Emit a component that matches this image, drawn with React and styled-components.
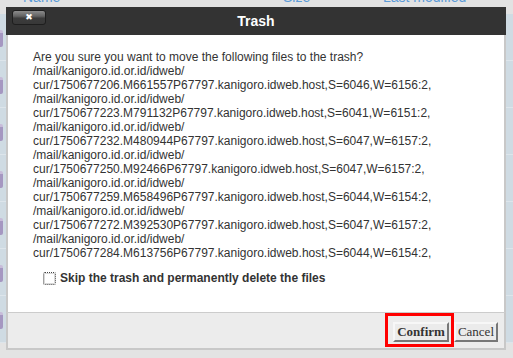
import React from "react"
import styled, { createGlobalStyle } from "styled-components"

const files = [
  "cur/1750677206.M661557P67797.kanigoro.idweb.host,S=6046,W=6156:2,",
  "cur/1750677223.M791132P67797.kanigoro.idweb.host,S=6041,W=6151:2,",
  "cur/1750677232.M480944P67797.kanigoro.idweb.host,S=6047,W=6157:2,",
  "cur/1750677250.M92466P67797.kanigoro.idweb.host,S=6047,W=6157:2,",
  "cur/1750677259.M658496P67797.kanigoro.idweb.host,S=6044,W=6154:2,",
  "cur/1750677272.M392530P67797.kanigoro.idweb.host,S=6047,W=6157:2,",
  "cur/1750677284.M613756P67797.kanigoro.idweb.host,S=6044,W=6154:2,",
]

const GlobalStyle = createGlobalStyle`
  html, body {
    margin: 0;
    padding: 0;
  }
  body {
    font-family: "Liberation Sans", Arial, sans-serif;
    background: #e3e3e3;
  }
`

export default function App() {
  return (
    <>
      <GlobalStyle />
      <Page>
        <FileTable>
          <HeaderRow>
            <HeadCell $width="260px">Name</HeadCell>
            <HeadCell $width="100px">Size</HeadCell>
            <HeadCell>Last modified</HeadCell>
          </HeaderRow>
          {files.map((f, i) => (
            <FileRow key={i}>
              <FileIcon />
            </FileRow>
          ))}
        </FileTable>

        <Dialog>
          <TitleBar>
            <CloseButton>✖</CloseButton>
            <Title>Trash</Title>
          </TitleBar>
          <Body>
            <Message>
              <Line>Are you sure you want to move the following files to the trash?</Line>
              {files.map((f, i) => (
                <React.Fragment key={i}>
                  <Line>/mail/kanigoro.id.or.id/idweb/</Line>
                  <Line>{f}</Line>
                </React.Fragment>
              ))}
            </Message>
            <SkipRow>
              <CheckBox />
              <SkipLabel>Skip the trash and permanently delete the files</SkipLabel>
            </SkipRow>
          </Body>
          <Footer>
            <Highlight>
              <Button $primary>Confirm</Button>
            </Highlight>
            <Button>Cancel</Button>
          </Footer>
        </Dialog>
      </Page>
    </>
  )
}

const Page = styled.div`
  position: relative;
  height: 358px;
  overflow: hidden;
  background: #e3e3e3;
`

const FileTable = styled.div`
  display: flex;
  flex-direction: column;
`

const HeaderRow = styled.div`
  height: 14px;
  display: flex;
  align-items: flex-end;
  padding: 0 0 10px 23px;
  box-sizing: border-box;
  overflow: hidden;
  background: #e2e2e2;
`

const HeadCell = styled.div`
  width: ${(p) => p.$width || "auto"};
  font-size: 14px;
  line-height: 14px;
  color: #5b9bd8;
`

const FileRow = styled.div`
  height: 47px;
  box-sizing: border-box;
  display: flex;
  align-items: center;
  background: #cfdbe3;
  border-bottom: 1px solid #dde5eb;
`

const FileIcon = styled.div`
  width: 3px;
  height: 17px;
  margin-top: 3px;
  background: linear-gradient(#c7bcd9 0 3px, #a597c1 3px);
  border-radius: 0 2px 2px 0;
`

const Dialog = styled.div`
  position: absolute;
  left: 6px;
  top: 7px;
  width: 500px;
  height: 343px;
  display: flex;
  flex-direction: column;
`

const TitleBar = styled.div`
  height: 28px;
  background: #333333;
  display: grid;
  grid-template-columns: 1fr auto 1fr;
  align-items: center;
`

const CloseButton = styled.div`
  justify-self: start;
  align-self: start;
  margin: 3px 0 0 6px;
  width: 34px;
  height: 15px;
  box-sizing: border-box;
  border: 1px solid #1e1e1e;
  border-radius: 3px;
  background: linear-gradient(#8c8c8c, #626262 40%, #3c3c3c 55%, #383838);
  color: #fff;
  font-size: 9px;
  line-height: 13px;
  text-align: center;
  font-family: "DejaVu Sans", sans-serif;
`

const Title = styled.div`
  grid-column: 2;
  color: #fff;
  font-size: 14px;
  font-weight: bold;
`

const Body = styled.div`
  flex: 1;
  background: #fff;
  border-left: 2px solid #c8c8c8;
  border-right: 2px solid #c8c8c8;
  padding: 15px 20px 0 25px;
  display: flex;
  flex-direction: column;
`

const Message = styled.div`
  font-size: 12px;
  line-height: 14px;
  color: #333;
`

const Line = styled.div`
  white-space: nowrap;
`

const SkipRow = styled.label`
  display: flex;
  align-items: center;
  margin: 11px 0 0 10px;
  gap: 4px;
`

const CheckBox = styled.span`
  width: 13px;
  height: 13px;
  box-sizing: border-box;
  border: 1px dotted #444;
  border-radius: 2px;
  background: #fff;
  box-shadow: inset 0 0 0 1px #d8d8d8;
`

const SkipLabel = styled.span`
  font-size: 12px;
  font-weight: bold;
  color: #333;
`

const Footer = styled.div`
  height: 33px;
  background: #ececec;
  border-top: 1px solid #cccccc;
  border-left: 2px solid #c8c8c8;
  border-right: 2px solid #c8c8c8;
  border-bottom: 2px solid #c8c8c8;
  display: flex;
  justify-content: flex-end;
  align-items: center;
  gap: 5px;
  padding: 2px 6px 0 0;
`

const Highlight = styled.div`
  position: relative;
  display: flex;

  &::after {
    content: "";
    position: absolute;
    top: -9px;
    left: -8px;
    right: -5px;
    bottom: -5px;
    border: 3px solid #f00;
    pointer-events: none;
  }
`

const Button = styled.button`
  font-family: "Liberation Serif", "Times New Roman", serif;
  font-size: 13px;
  font-weight: ${(p) => (p.$primary ? "bold" : "normal")};
  line-height: 14px;
  padding: 1px 2px;
  color: #333;
  background: #ebebeb;
  border: 2px solid;
  border-color: #f7f7f7 #777 #777 #f7f7f7;
  border-radius: 0;
  cursor: pointer;
`
